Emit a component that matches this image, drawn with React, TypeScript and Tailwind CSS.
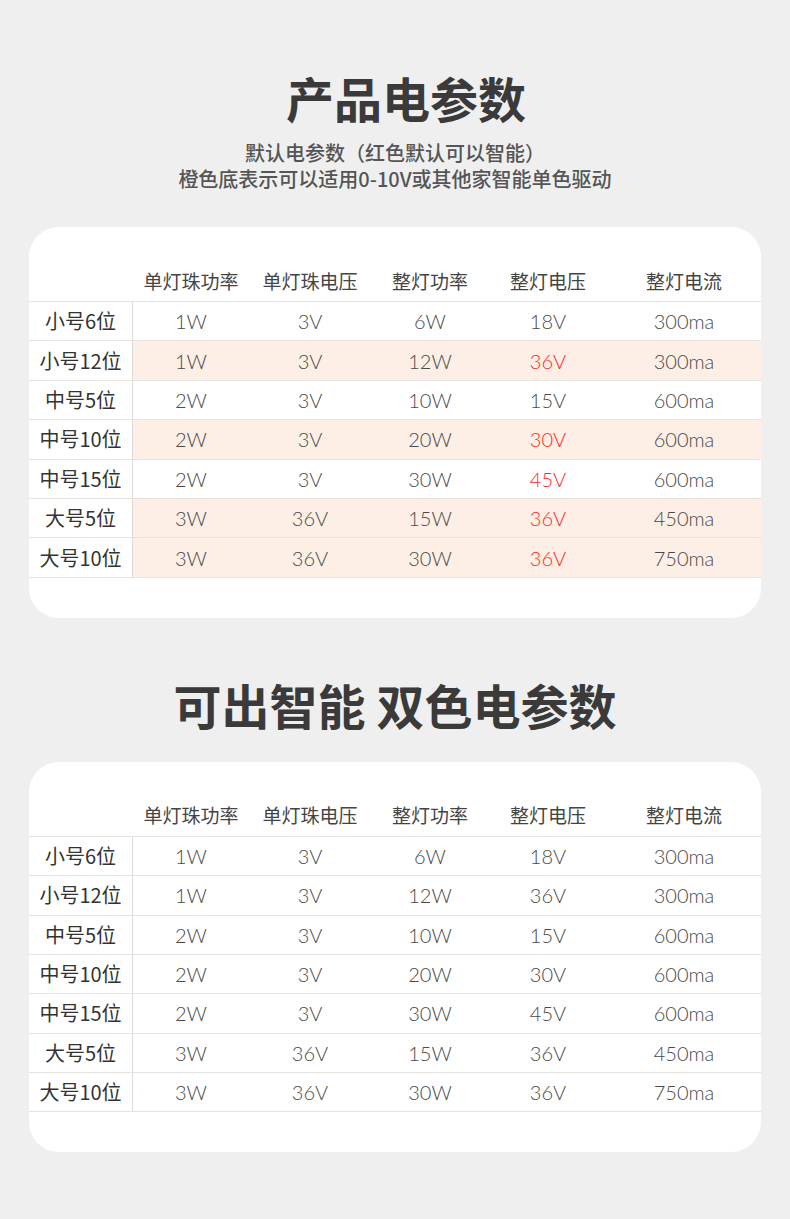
const cols = ["单灯珠功率", "单灯珠电压", "整灯功率", "整灯电压", "整灯电流"];
const widths = ["w-[116px]", "w-[122px]", "w-[118px]", "w-[118px]", "flex-1"];

type Row = { label: string; vals: string[]; orange?: boolean; red?: boolean };

const rows1: Row[] = [
  { label: "小号6位", vals: ["1W", "3V", "6W", "18V", "300ma"] },
  { label: "小号12位", vals: ["1W", "3V", "12W", "36V", "300ma"], orange: true, red: true },
  { label: "中号5位", vals: ["2W", "3V", "10W", "15V", "600ma"] },
  { label: "中号10位", vals: ["2W", "3V", "20W", "30V", "600ma"], orange: true, red: true },
  { label: "中号15位", vals: ["2W", "3V", "30W", "45V", "600ma"], red: true },
  { label: "大号5位", vals: ["3W", "36V", "15W", "36V", "450ma"], orange: true, red: true },
  { label: "大号10位", vals: ["3W", "36V", "30W", "36V", "750ma"], orange: true, red: true },
];

const rows2: Row[] = rows1.map((r) => ({ label: r.label, vals: r.vals }));

function Table({ rows }: { rows: Row[] }) {
  return (
    <div className="mx-[29px] rounded-[30px] bg-white pb-[40px] pt-[34px]">
      {/* header */}
      <div className="flex h-[40px] items-center text-[19px] text-[#444]">
        <div className="w-[104px]" />
        {cols.map((c, i) => (
          <div key={c} className={`${widths[i]} text-center`}>
            {c}
          </div>
        ))}
      </div>
      <div className="border-b border-[#e6e2df]">
        {rows.map((r) => (
          <div key={r.label} className="flex h-[39.4px] border-t border-[#e6e2df]">
            <div className="flex w-[104px] items-center justify-center border-r border-[#dadada] text-[20px] text-[#333]">
              {r.label}
            </div>
            <div
              className={`flex flex-1 items-center font-['Lato',sans-serif] text-[20px] font-light text-[#4a4a4a] ${
                r.orange ? "bg-[#fdefe5]" : ""
              }`}
            >
              {r.vals.map((v, i) => (
                <div
                  key={i}
                  className={`${widths[i]} text-center ${i === 3 && r.red ? "text-[#ff1f24]" : ""}`}
                >
                  {v}
                </div>
              ))}
            </div>
          </div>
        ))}
      </div>
    </div>
  );
}

export default function App() {
  return (
    <div className="min-h-[1219px] bg-[#efefef] pt-[69px] pb-[68px] font-['Noto_Sans_CJK_SC',sans-serif]">
      <h1 className="pl-[22px] text-center text-[48px] font-bold leading-[56px] text-[#3a3a3a]">
        产品电参数
      </h1>
      <div className="mt-[15px] text-center text-[20px] font-medium leading-[26px] text-[#555]">
        <p>默认电参数（红色默认可以智能）</p>
        <p>橙色底表示可以适用0-10V或其他家智能单色驱动</p>
      </div>

      <div className="mt-[35px]">
        <Table rows={rows1} />
      </div>

      <h2 className="mt-[58px] text-center text-[48px] font-bold leading-[56px] text-[#3a3a3a]">
        可出智能 双色电参数
      </h2>

      <div className="mt-[30px]">
        <Table rows={rows2} />
      </div>
    </div>
  );
}
